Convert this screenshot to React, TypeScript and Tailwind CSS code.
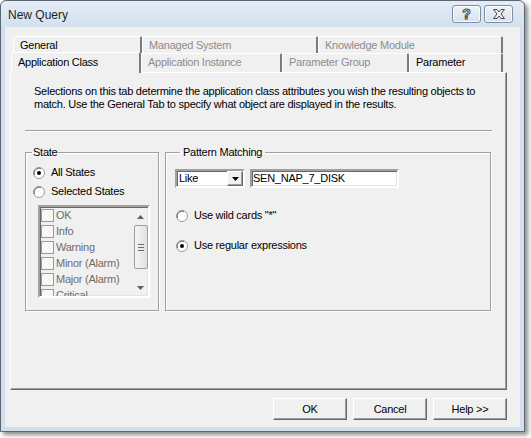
import React from "react";

const sunken =
  "border-2 border-t-[#a0a0a0] border-l-[#a0a0a0] border-r-white border-b-white shadow-[inset_1px_1px_0_#696969,inset_-1px_-1px_0_#e3e3e3]";
const raised =
  "border border-t-white border-l-white border-r-[#696969] border-b-[#696969] shadow-[inset_-1px_-1px_0_#a0a0a0]";

function Radio({ checked }: { checked?: boolean }) {
  return (
    <svg width="12" height="12" viewBox="0 0 12 12" className="shrink-0">
      <circle cx="6" cy="6" r="5.5" fill="#fff" stroke="#9c9c9c" />
      <path d="M1.5 8 A5 5 0 0 1 8 1.5" fill="none" stroke="#6d6d6d" strokeWidth="1" />
      {checked && <circle cx="6" cy="6" r="2" fill="#000" />}
    </svg>
  );
}

function RadioRow({ label, checked }: { label: string; checked?: boolean }) {
  return (
    <div className="flex items-center gap-[6px] h-[13px]">
      <Radio checked={checked} />
      <span>{label}</span>
    </div>
  );
}

function Tab({
  label,
  width,
  dim,
  selected,
  short,
}: {
  label: string;
  width: number;
  dim?: boolean;
  selected?: boolean;
  short?: boolean;
}) {
  const height = selected ? "h-[21px] -mb-px relative z-10 pb-[2px]" : short ? "h-[17px]" : "h-[19px] pb-[2px]";
  return (
    <div
      style={{ width }}
      className={`flex items-center pl-[6px] border-t border-l border-t-white border-l-white border-r-2 border-r-[#7a7a7a] rounded-t-[2px] bg-[#f0f0f0] ${
        dim ? "text-[#8d8d8d]" : "text-black"
      } ${height}`}
    >
      {label}
    </div>
  );
}

function Button({ label }: { label: string }) {
  return (
    <button className={`w-[74px] h-[22px] bg-[#f0f0f0] flex items-center justify-center ${raised}`}>
      {label}
    </button>
  );
}

const states = ["OK", "Info", "Warning", "Minor (Alarm)", "Major (Alarm)", "Critical"];

export default function App() {
  return (
    <div className="w-[531px] h-[438px] bg-white font-['Liberation_Sans',Arial,sans-serif] text-[11px] tracking-[-0.25px] text-black leading-[13px]">
      <div className="w-[525px] h-[432px] rounded-t-[6px] border border-[#5d6673] bg-[#d3dfed] shadow-[3px_3px_4px_rgba(0,0,0,0.45)] flex flex-col">
        {/* title bar */}
        <div className="h-[26px] shrink-0 flex items-start pl-[7px] pr-[11px] rounded-t-[6px] bg-gradient-to-b from-[#e3ecf7] to-[#d5e1ef]">
          <span className="text-[12px] tracking-normal mt-[8px] text-[#1e1e1e]">New Query</span>
          <div className="ml-auto mt-[4px] flex gap-[3px]">
            <div className="w-[29px] h-[18px] rounded-[3px] border border-[#7e8fa5] bg-gradient-to-b from-[#eef3fa] to-[#d6e1ee] shadow-[inset_0_0_0_1px_rgba(255,255,255,0.8)] flex items-center justify-center">
              <span className="text-[14px] font-bold leading-none text-[#f2f2f2] [-webkit-text-stroke:1px_#4a4a4a]">?</span>
            </div>
            <div className="w-[29px] h-[18px] rounded-[3px] border border-[#7e8fa5] bg-gradient-to-b from-[#eef3fa] to-[#d6e1ee] shadow-[inset_0_0_0_1px_rgba(255,255,255,0.8)] flex items-center justify-center">
              <svg width="14" height="10" viewBox="0 0 14 10">
                <path
                  d="M1.5 0.5 H5 L7 3 L9 0.5 H12.5 L9 5 L12.5 9.5 H9 L7 7 L5 9.5 H1.5 L5 5 Z"
                  fill="#f2f2f2"
                  stroke="#4a4a4a"
                  strokeWidth="1"
                  strokeLinejoin="round"
                />
              </svg>
            </div>
          </div>
        </div>

        {/* client area */}
        <div className="mx-[4px] h-[400px] bg-[#f0f0f0] pl-[5px] pt-[9px] flex flex-col">
          <div className="w-[497px]">
            <div className="flex pl-[3px]">
              <Tab label="General" width={129} short />
              <Tab label="Managed System" width={176} dim short />
              <Tab label="Knowledge Module" width={185} dim short />
            </div>
            <div className="flex pl-px items-end h-[19px]">
              <Tab label="Application Class" width={130} selected />
              <Tab label="Application Instance" width={141} dim />
              <Tab label="Parameter Group" width={127} dim />
              <Tab label="Parameter" width={94} />
            </div>

            <div className="h-[318px] border border-t-white border-l-white border-r-[#696969] border-b-[#696969] shadow-[inset_-1px_-1px_0_#a0a0a0] px-[14px]">
              <p className="pl-[9px] pt-[12px]">
                Selections on this tab determine the application class attributes you wish the resulting objects to
                <br />
                match. Use the General Tab to specify what object are displayed in the results.
              </p>
              <div className="mt-[19px] w-[467px] h-[2px] border-t border-t-[#a0a0a0] border-b border-b-white" />

              <div className="mt-[14px] flex gap-[6px]">
                <fieldset className="w-[134px] h-[165px] border border-[#a0a0a0] shadow-[1px_1px_0_#fff,inset_1px_1px_0_#fff] px-[7px]">
                  <legend className="px-[1px] -ml-[1px]">State</legend>
                  <div className="pt-[7px] flex flex-col gap-[6px]">
                    <RadioRow label="All States" checked />
                    <RadioRow label="Selected States" />
                  </div>
                  <div className={`mt-[7px] ml-[5px] w-[112px] h-[93px] bg-[#f0f0f0] flex overflow-hidden ${sunken}`}>
                    <div className="flex-1 flex flex-col text-[#6d6d6d] pl-[1px]">
                      {states.map((s) => (
                        <div key={s} className="h-[16px] shrink-0 flex items-center gap-[2px]">
                          <div className="w-[13px] h-[13px] border border-[#9a9a9a] bg-[#f7f7f7]" />
                          <span>{s}</span>
                        </div>
                      ))}
                    </div>
                    <div className="w-[15px] flex flex-col items-center">
                      <svg width="7" height="4" viewBox="0 0 7 4" className="mt-[8px]">
                        <path d="M0 4 L3.5 0 L7 4 Z" fill="#606060" />
                      </svg>
                      <div className="mt-[6px] w-[14px] h-[44px] rounded-[2px] border border-[#9d9d9d] bg-gradient-to-r from-[#f4f4f4] to-[#e1e1e1] flex flex-col items-center justify-center gap-[2px]">
                        <div className="w-[6px] h-px bg-[#6d6d6d]" />
                        <div className="w-[6px] h-px bg-[#6d6d6d]" />
                        <div className="w-[6px] h-px bg-[#6d6d6d]" />
                      </div>
                      <svg width="7" height="4" viewBox="0 0 7 4" className="mt-auto mb-[6px]">
                        <path d="M0 0 L7 0 L3.5 4 Z" fill="#606060" />
                      </svg>
                    </div>
                  </div>
                </fieldset>

                <fieldset className="w-[326px] h-[165px] border border-[#a0a0a0] shadow-[1px_1px_0_#fff,inset_1px_1px_0_#fff] px-[9px]">
                  <legend className="ml-[5px] px-[3px]">Pattern Matching</legend>
                  <div className="pt-[10px] flex gap-[5px]">
                    <div className={`w-[70px] h-[19px] bg-white flex items-center ${sunken}`}>
                      <span className="pl-[2px] flex-1">Like</span>
                      <div className={`w-[16px] h-[15px] bg-[#f0f0f0] flex items-center justify-center ${raised}`}>
                        <svg width="7" height="4" viewBox="0 0 7 4">
                          <path d="M0 0 L7 0 L3.5 4 Z" fill="#000" />
                        </svg>
                      </div>
                    </div>
                    <div className={`w-[149px] h-[19px] bg-white flex items-center pl-[1px] ${sunken}`}>
                      SEN_NAP_7_DISK
                    </div>
                  </div>
                  <div className="mt-[21px] pl-px flex flex-col gap-[17px]">
                    <RadioRow label={'Use wild cards "*"'} />
                    <RadioRow label="Use regular expressions" checked />
                  </div>
                </fieldset>
              </div>
            </div>

            <div className="mt-[8px] flex justify-end gap-[6px]">
              <Button label="OK" />
              <Button label="Cancel" />
              <Button label="Help >>" />
            </div>
          </div>
        </div>
      </div>
    </div>
  );
}
